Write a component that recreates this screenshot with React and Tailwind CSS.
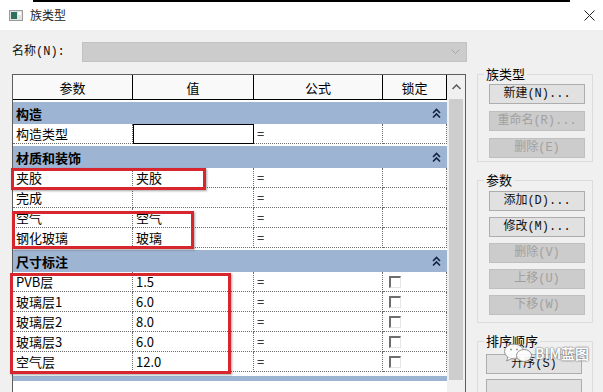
import React from 'react';

const ui = "font-['Noto_Sans_CJK_SC','Liberation_Sans',sans-serif]";
const mono = "font-['Liberation_Mono','Noto_Sans_CJK_SC',monospace]";

const columns = [
  { label: '参数', width: 'w-[120px]' },
  { label: '值', width: 'w-[121px]' },
  { label: '公式', width: 'w-[129px]' },
  { label: '锁定', width: 'w-[64px]' },
];

const groups = [
  { title: '构造', rows: [{ name: '构造类型', value: '', editing: true }] },
  {
    title: '材质和装饰',
    rows: [
      { name: '夹胶', value: '夹胶' },
      { name: '完成', value: '' },
      { name: '空气', value: '空气' },
      { name: '钢化玻璃', value: '玻璃' },
    ],
  },
  {
    title: '尺寸标注',
    check: true,
    rows: [
      { name: 'PVB层', value: '1.5' },
      { name: '玻璃层1', value: '6.0' },
      { name: '玻璃层2', value: '8.0' },
      { name: '玻璃层3', value: '6.0' },
      { name: '空气层', value: '12.0' },
    ],
  },
];

function DoubleChevron() {
  return (
    <svg width="9" height="11" viewBox="0 0 9 11" className="shrink-0">
      <path d="M1 5 L4.5 1.5 L8 5 M1 9.5 L4.5 6 L8 9.5" fill="none" stroke="#14233f" strokeWidth="1.6" />
    </svg>
  );
}

function Checkbox() {
  return <div className="ml-[3px] h-[12px] w-[12px] border-t-2 border-l-2 border-r border-b border-t-[#6d6d6d] border-l-[#6d6d6d] border-r-[#e6e6e6] border-b-[#e6e6e6] bg-white" />;
}

function Row({ row, check }) {
  const cell = 'flex items-center border-r border-b border-dotted border-[#6b6b6b] pl-[3px]';
  return (
    <div className="flex h-[20px] bg-white text-[13px] leading-none text-black">
      <div className={`w-[120px] ${cell}`}>{row.name}</div>
      {row.editing ? (
        <div className="flex w-[121px] items-center border border-black pl-[3px]">{row.value}</div>
      ) : (
        <div className={`w-[121px] ${cell}`}>{row.value}</div>
      )}
      <div className={`w-[129px] ${cell}`}>=</div>
      <div className={`w-[64px] ${cell}`}>{check && <Checkbox />}</div>
    </div>
  );
}

function Btn({ children, disabled }) {
  return (
    <div
      className={`flex h-[20px] w-[96px] items-center justify-center border text-[12px] leading-none ${mono} ${
        disabled ? 'border-[#bfbfbf] bg-[#cccccc] text-[#a0a0a0]' : 'border-[#adadad] bg-[#e1e1e1] text-[#111111]'
      }`}
    >
      {children}
    </div>
  );
}

function Group({ title, className, children }) {
  return (
    <fieldset className={`w-[116px] border border-[#dcdcdc] ${className}`}>
      <legend className={`ml-[6px] px-[2px] text-[13px] leading-[14px] text-black ${ui}`}>{title}</legend>
      {children}
    </fieldset>
  );
}

export default function App() {
  return (
    <div className={`relative h-[392px] w-[603px] overflow-hidden bg-[#f0f0f0] ${ui}`}>
      {/* title bar */}
      <div className="h-[30px] bg-white">
        <div className="ml-[33px] h-[2px] w-[537px] bg-black" />
        <div className="flex h-[28px] items-center pl-[9px] pr-[8px]">
          <svg width="14" height="11" viewBox="0 0 14 11" className="mb-[2px]">
            <rect x="0.5" y="0.5" width="13" height="10" fill="#e4e4e4" stroke="#9a9a9a" />
            <rect x="2" y="2" width="6" height="7" fill="#2f6f5f" />
            <rect x="9" y="2" width="3" height="3" fill="#ffffff" />
          </svg>
          <span className="ml-[7px] mb-[2px] text-[12px] leading-none text-[#222]">族类型</span>
          <svg width="11" height="11" viewBox="0 0 11 11" className="ml-auto mb-[2px]">
            <path d="M0.5 0.5 L10.5 10.5 M10.5 0.5 L0.5 10.5" stroke="#222" strokeWidth="1" />
          </svg>
        </div>
      </div>

      {/* name row */}
      <div className="mt-[12px] flex h-[20px] items-center pl-[12px]">
        <span className={`w-[70px] text-[12px] leading-none text-[#111] ${mono}`}>名称(N):</span>
        <div className="flex h-[20px] w-[385px] items-center justify-end border border-[#c2c2c2] bg-[#cccccc] pr-[6px]">
          <svg width="9" height="6" viewBox="0 0 9 6">
            <path d="M0.5 0.5 L4.5 4.5 L8.5 0.5" fill="none" stroke="#a5a5a5" strokeWidth="1" />
          </svg>
        </div>
      </div>

      <div className="mt-[5px] flex pl-[12px]">
        {/* parameter table */}
        <div className="mt-[7px] flex h-[330px] w-[454px] border border-[#5e5e5e] bg-white">
          <div className="flex w-[434px] flex-col">
            <div className="flex h-[25px] border-b border-black bg-[#f9f9f9] text-[13px] leading-none text-black">
              {columns.map((c) => (
                <div key={c.label} className={`flex items-center justify-center border-r border-black ${c.width}`}>
                  {c.label}
                </div>
              ))}
            </div>
            {groups.map((g) => (
              <div key={g.title}>
                <div className="mt-[2px] flex h-[22px] items-center justify-between bg-[#9db4d2] pl-[3px] pr-[6px] text-[13px] font-bold leading-none text-black">
                  <span>{g.title}</span>
                  <DoubleChevron />
                </div>
                {g.rows.map((r) => (
                  <Row key={r.name} row={r} check={g.check} />
                ))}
              </div>
            ))}
            <div className="mt-[4px] h-[5px] bg-[#9db4d2]" />
          </div>
          <div className="flex w-[18px] flex-col bg-[#f0f0f0]">
            <div className="flex h-[24px] items-center justify-center">
              <svg width="9" height="6" viewBox="0 0 9 6">
                <path d="M0.5 5 L4.5 1 L8.5 5" fill="none" stroke="#5a5a5a" strokeWidth="1.5" />
              </svg>
            </div>
            <div className="mx-[2px] h-[281px] bg-[#cdcdcd]" />
          </div>
        </div>

        {/* right side */}
        <div className="ml-[11px] flex flex-col">
          <Group title="族类型" className="">
            <div className="flex flex-col gap-[7px] pb-[3px] pl-[11px] pt-[3px]">
              <Btn>新建(N)...</Btn>
              <Btn disabled>重命名(R)...</Btn>
              <Btn disabled>删除(E)</Btn>
            </div>
          </Group>
          <Group title="参数" className="mt-[11px]">
            <div className="flex flex-col gap-[6px] pb-[7px] pl-[11px] pt-[4px]">
              <Btn>添加(D)...</Btn>
              <Btn>修改(M)...</Btn>
              <Btn disabled>删除(V)</Btn>
              <Btn disabled>上移(U)</Btn>
              <Btn disabled>下移(W)</Btn>
            </div>
          </Group>
          <Group title="排序顺序" className="mt-[11px]">
            <div className="flex flex-col gap-[5px] pb-[7px] pl-[8px] pt-[6px]">
              <Btn>升序(S)</Btn>
              <Btn />
            </div>
          </Group>
        </div>
      </div>

      {/* annotation boxes */}
      <div className="absolute left-[11px] top-[168px] h-[22px] w-[195px] border-[3px] border-[#d7262d] shadow-[1px_1px_2px_rgba(0,0,0,0.35)]" />
      <div className="absolute left-[12px] top-[211px] h-[38px] w-[182px] border-[3px] border-[#d7262d] shadow-[1px_1px_2px_rgba(0,0,0,0.35)]" />
      <div className="absolute left-[10px] top-[273px] h-[101px] w-[221px] border-[3px] border-[#d7262d] shadow-[1px_1px_2px_rgba(0,0,0,0.35)]" />

      {/* watermark */}
      <div className="absolute left-[503px] top-[343px] flex items-center opacity-90">
        <svg width="30" height="20" viewBox="0 0 30 20">
          <ellipse cx="11" cy="8.5" rx="9.5" ry="7.5" fill="#ffffff" stroke="#8c8c8c" strokeWidth="1" />
          <path d="M5 14 L3.5 18 L9 15.5" fill="#ffffff" stroke="#8c8c8c" strokeWidth="1" />
          <ellipse cx="21" cy="12.5" rx="7.5" ry="6" fill="#ffffff" stroke="#8c8c8c" strokeWidth="1" />
          <circle cx="8" cy="6.5" r="1" fill="#8c8c8c" />
          <circle cx="14" cy="6.5" r="1" fill="#8c8c8c" />
        </svg>
        <span className="ml-[2px] text-[14px] font-bold leading-none text-white [text-shadow:0_0_1px_#444,0_0_2px_#666]">BIM蓝图</span>
      </div>
    </div>
  );
}
